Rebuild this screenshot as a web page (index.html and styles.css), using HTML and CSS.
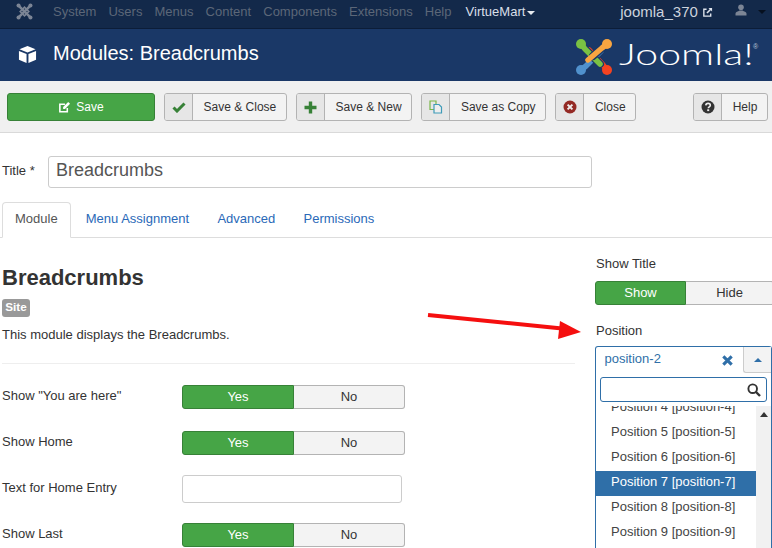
FILE: index.html
```html
<!DOCTYPE html>
<html lang="en">
<head>
<meta charset="utf-8">
<title>Modules: Breadcrumbs</title>
<link rel="stylesheet" href="styles.css">
</head>
<body>
<nav class="topbar">
  <svg class="top-logo" viewBox="0 0 20 20" width="17" height="17"><g fill="none" stroke="#7c8595" stroke-width="3" stroke-linecap="round"><path d="M3 3 L17 17"/><path d="M17 3 L3 17"/><path d="M5 10 L10 5 L15 10 L10 15z" stroke-width="2"/></g><g fill="#7c8595"><circle cx="3" cy="3" r="2.400"/><circle cx="17" cy="3" r="2.400"/><circle cx="3" cy="17" r="2.400"/><circle cx="17" cy="17" r="2.400"/></g></svg>
  <ul class="menu">
    <li>System</li><li>Users</li><li>Menus</li><li>Content</li><li>Components</li><li>Extensions</li><li>Help</li>
    <li class="active">VirtueMart<span class="caret light"></span></li>
  </ul>
  <div class="top-right">
    <span class="site">joomla_370
      <svg viewBox="0 0 12 12" width="11" height="11"><path d="M5 2.500H2v7.500h7.500V7" fill="none" stroke="#dfe4ec" stroke-width="1.500"/><path d="M7 1h4v4L9.600 3.600 6 7.200 4.800 6l3.600-3.600z" fill="#dfe4ec"/></svg>
    </span>
    <svg class="user" viewBox="0 0 12 12" width="12" height="12"><circle cx="6" cy="3.200" r="2.800" fill="#7c8595"/><path d="M0.500 11.500V9.500C0.500 8 3 7.500 4.500 6.500h3C9 7.500 11.500 8 11.500 9.500v2z" fill="#7c8595"/></svg>
    <span class="caret dark"></span>
  </div>
</nav>

<header class="header">
  <svg class="cube" viewBox="0 0 20 20" width="19" height="19"><path d="M10 1 L18.500 4.600 10 8 1.500 4.600z" fill="#fff"/><path d="M1 6.200 L9 9.400V19L1 15.600z" fill="#fff"/><path d="M19 6.200 L11 9.400V19L19 15.600z" fill="#fff"/></svg>
  <h1>Modules: Breadcrumbs</h1>
  <div class="brand">
    <svg viewBox="0 0 36 36" width="36" height="36">
      <g fill="none" stroke-linecap="round" stroke-linejoin="round">
        <path d="M31 31 L27 26 L13 11" stroke="#1a3867" stroke-width="8"/>
        <path d="M31 31 L27 26 L13 11" stroke="#f44321" stroke-width="5.500"/>
        <path d="M5 31 L10 27 L25 12" stroke="#1a3867" stroke-width="8"/>
        <path d="M5 31 L10 27 L25 12" stroke="#5091cd" stroke-width="5.500"/>
        <path d="M5 5 L9 10 L24 25" stroke="#1a3867" stroke-width="8"/>
        <path d="M5 5 L9 10 L24 25" stroke="#7ac143" stroke-width="5.500"/>
        <path d="M31 5 L26 9 L17 17" stroke="#1a3867" stroke-width="8"/>
        <path d="M31 5 L26 9 L12 21" stroke="#f9a541" stroke-width="5.500"/>
      </g>
      <circle cx="5" cy="5" r="5" fill="#7ac143"/><circle cx="31" cy="5" r="5" fill="#f9a541"/><circle cx="5" cy="31" r="5" fill="#5091cd"/><circle cx="31" cy="31" r="5" fill="#f44321"/>
    </svg>
    <span class="wordmark"><span class="wordmark-text">Joomla!</span></span>
    <span class="reg">®</span>
  </div>
</header>

<div class="toolbar">
  <button class="btn save" type="button">
    <svg viewBox="0 0 14 14" width="13" height="13"><path d="M10 7.500V11.500H2V3.500H7.500" fill="none" stroke="#fff" stroke-width="1.700"/><path d="M5.500 6.500L11 1l2 2-5.500 5.500H5.500z" fill="#fff"/></svg>
    Save
  </button>
  <button class="btn" type="button"><span class="ico"><svg viewBox="0 0 14 12" width="14" height="12"><path d="M1.500 6.500L5 10 12.500 2.500" fill="none" stroke="#378137" stroke-width="3"/></svg></span><span class="lbl">Save &amp; Close</span></button>
  <button class="btn" type="button"><span class="ico"><svg viewBox="0 0 13 13" width="13" height="13"><path d="M6.500 0.500v12M0.500 6.500h12" stroke="#378137" stroke-width="3.400"/></svg></span><span class="lbl">Save &amp; New</span></button>
  <button class="btn" type="button"><span class="ico"><svg viewBox="0 0 14 14" width="14" height="14"><path d="M1 1h6l0 8.500H1z" fill="none" stroke="#7ab648" stroke-width="1.200"/><path d="M5 4.500h5l2.500 2.500V13H5z" fill="#eeeeee" stroke="#3f9bb8" stroke-width="1.200"/></svg></span><span class="lbl">Save as Copy</span></button>
  <button class="btn" type="button"><span class="ico"><svg viewBox="0 0 14 14" width="14" height="14"><circle cx="7" cy="7" r="6.500" fill="#942a25"/><path d="M4.600 4.600l4.800 4.800M9.400 4.600l-4.800 4.800" stroke="#eee" stroke-width="2"/></svg></span><span class="lbl">Close</span></button>
  <button class="btn help" type="button"><span class="ico"><svg viewBox="0 0 14 14" width="14" height="14"><circle cx="7" cy="7" r="6.500" fill="#333"/><path d="M4.800 5.400C4.900 4 6 3.400 7.100 3.400c1.300 0 2.200.8 2.200 1.900 0 1.700-2 1.600-2 3" fill="none" stroke="#eee" stroke-width="1.600"/><rect x="6.200" y="9.300" width="2" height="1.800" fill="#eee"/></svg></span><span class="lbl">Help</span></button>
</div>

<div class="title-row">
  <label class="title-label" for="title">Title *</label>
  <input class="title-input" id="title" type="text" value="Breadcrumbs">
</div>

<ul class="tabs">
  <li class="tab on">Module</li>
  <li class="tab">Menu Assignment</li>
  <li class="tab">Advanced</li>
  <li class="tab">Permissions</li>
</ul>

<main class="content">
  <section class="left">
    <h2>Breadcrumbs</h2>
    <span class="badge">Site</span>
    <p class="desc">This module displays the Breadcrumbs.</p>
    <hr>
    <div class="field">
      <span class="field-label">Show "You are here"</span>
      <div class="toggle"><span class="yes">Yes</span><span class="no">No</span></div>
    </div>
    <div class="field">
      <span class="field-label">Show Home</span>
      <div class="toggle"><span class="yes">Yes</span><span class="no">No</span></div>
    </div>
    <div class="field">
      <span class="field-label">Text for Home Entry</span>
      <input class="text-input" type="text">
    </div>
    <div class="field">
      <span class="field-label">Show Last</span>
      <div class="toggle"><span class="yes">Yes</span><span class="no">No</span></div>
    </div>
  </section>
  <aside class="right">
    <div class="side-label">Show Title</div>
    <div class="toggle wide"><span class="yes">Show</span><span class="no">Hide</span></div>
    <div class="side-label pos">Position</div>
    <div class="chosen">
      <div class="chosen-head">
        <span class="chosen-value">position-2</span>
        <svg class="chosen-x" viewBox="0 0 10 10" width="11" height="11"><path d="M1.200 1.200l7.600 7.600M8.800 1.200L1.200 8.800" stroke="#2f6fa8" stroke-width="2.800"/></svg>
        <span class="chosen-arrow"><span class="tri"></span></span>
      </div>
      <div class="chosen-search">
        <svg viewBox="0 0 14 14" width="14" height="14"><circle cx="5.700" cy="5.700" r="4.300" fill="none" stroke="#333" stroke-width="1.900"/><path d="M9 9l4 4" stroke="#333" stroke-width="2.400"/></svg>
      </div>
      <div class="chosen-list">
        <ul class="options">
          <li>Position 4 [position-4]</li>
          <li>Position 5 [position-5]</li>
          <li>Position 6 [position-6]</li>
          <li class="hl">Position 7 [position-7]</li>
          <li>Position 8 [position-8]</li>
          <li>Position 9 [position-9]</li>
        </ul>
        <div class="scrollbar"><span class="up"></span></div>
      </div>
    </div>
  </aside>
</main>

<svg class="red-arrow" viewBox="0 0 772 548" width="772" height="548"><path d="M428 315 L562 328.500" stroke="#f50f0f" stroke-width="4"/><path d="M581 332 L558 339 L560 321z" fill="#f50f0f"/></svg>
</body>
</html>
```
FILE: styles.css
```css
* { box-sizing: border-box; }
html, body { margin: 0; padding: 0; height: 548px; overflow: hidden; }
body { position: relative; width: 772px; background: #fff; color: #333; font: 13px/18px "Liberation Sans", Arial, sans-serif; }
ul { list-style: none; margin: 0; padding: 0; }

.topbar { height: 29px; background: #13294a; border-bottom: 1px solid #0c1d38; display: flex; align-items: center; }
.top-logo { margin-left: 16px; margin-top: -5px; flex: none; }
.menu { display: flex; margin-left: 20px; margin-top: -5px; color: #5c6778; }
.menu li { margin-right: 12.100px; white-space: nowrap; }
.menu .active { color: #d9dfe8; margin-left: 2px; margin-right: 0; }
.caret { display: inline-block; width: 0; height: 0; border: 4px solid transparent; border-bottom: 0; margin-left: 2px; vertical-align: 1px; }
.caret.light { border-top-color: #e6e9ee; }
.caret.dark { border-top-color: #06101f; margin-left: 11px; }
.top-right { margin-left: auto; display: flex; align-items: center; margin-top: -5px; padding-right: 6px; }
.site { font-size: 15px; color: #ccd3dd; margin-right: 22px; white-space: nowrap; }
.site svg { vertical-align: -1px; }
.user { margin-top: -3px; }

.header { height: 52px; background: #1a3867; display: flex; align-items: center; padding-left: 18px; color: #fff; }
.cube { flex: none; margin-top: -1px; }
h1 { margin: 0 0 5px 16px; font-size: 20px; font-weight: 400; line-height: 24px; }
.brand { margin-left: auto; display: flex; align-items: center; padding-right: 14px; margin-top: 3px; }
.wordmark { display: block; width: 134px; margin: -8px 0 0 7px; height: 36px; }
.wordmark-text { display: block; width: 97px; font-family: "Lato", sans-serif; font-weight: 300; font-size: 30px; line-height: 36px; color: #fff; transform: scaleX(1.370); transform-origin: 0 50%; white-space: nowrap; }
.reg { display: block; width: 5px; font-size: 7px; line-height: 8px; color: #bcc6d6; margin-top: -19px; }

.toolbar { height: 52px; background: #f0f0f0; border-bottom: 1px solid #d9d9d9; padding: 12px 4px 0 7px; display: flex; align-items: flex-start; gap: 9px; }
.btn { flex: none; height: 28px; padding: 0; display: flex; align-items: stretch; font: 12px/26px "Liberation Sans", Arial, sans-serif; color: #333; white-space: nowrap; background: #f3f3f3; border: 1px solid #b3b3b3; border-radius: 3px; }
.btn .ico { width: 28px; border-right: 1px solid #b3b3b3; background: #e6e6e6; display: flex; align-items: center; justify-content: center; border-radius: 2px 0 0 2px; }
.btn .lbl { padding: 0 9.700px 0 10.600px; }
.btn.save { width: 148px; background: #46a546; border-color: #378137; color: #fff; justify-content: center; align-items: center; gap: 5px; }
.btn.help { margin-left: auto; }

.title-row { display: flex; align-items: center; padding: 23px 0 0 2px; }
.title-label { width: 46px; margin-top: -3px; }
.title-input { width: 544px; height: 32px; padding: 0 7px 3px; font: 18px/24px "Liberation Sans", Arial, sans-serif; color: #555; border: 1px solid #ccc; border-radius: 3px; background: #fff; }

.tabs { display: flex; margin-top: 14px; height: 36px; border-bottom: 1px solid #ddd; padding-left: 2px; }
.tab { padding: 8px 14.150px 0; height: 36px; color: #2a69b8; white-space: nowrap; }
.tab.on { height: 36px; color: #555; background: #fff; border: 1px solid #ddd; border-bottom-color: #fff; border-radius: 4px 4px 0 0; padding: 7px 12px 0; margin-right: 1px; }

.content { display: flex; align-items: flex-start; padding-left: 2px; }
.left { width: 573px; flex: none; padding-top: 26px; }
h2 { margin: 0; font-size: 22px; line-height: 28px; font-weight: 700; color: #333; }
.badge { display: block; width: 28px; height: 18px; margin-top: 7px; background: #999; color: #fff; font-size: 11.700px; font-weight: 700; line-height: 15px; text-align: center; border-radius: 3px; }
.desc { margin: 9px 0 0; }
hr { margin: 19px 0 0; border: 0; border-top: 1px solid #eee; }
.field { display: flex; align-items: flex-start; height: 46px; }
.left hr + .field { margin-top: 21px; }
.field-label { width: 180px; flex: none; margin-top: 2px; }
.toggle { display: flex; width: 223px; height: 24px; line-height: 21px; text-align: center; border-radius: 3px; }
.toggle .yes { flex: none; width: 112px; background: #46a546; border: 1px solid #378137; color: #fff; border-radius: 3px 0 0 3px; }
.toggle .no { flex: 1; background: #f3f3f3; border: 1px solid #b3b3b3; border-left: 0; color: #333; border-radius: 0 3px 3px 0; }
.text-input { width: 220px; height: 28px; margin-top: -2px; border: 1px solid #ccc; border-radius: 3px; background: #fff; }

.right { flex: none; width: 177px; margin-left: 20px; padding-top: 17px; }
.side-label { height: 18px; padding-left: 1px; }
.toggle.wide { width: 179px; margin-top: 8px; }
.toggle.wide .yes { width: 91px; }
.side-label.pos { margin-top: 17px; }

.chosen { position: relative; margin-top: 6px; height: 220px; border: 1px solid #2f6fa8; border-radius: 3px 3px 0 0; border-bottom: 0; background: #fff; }
.chosen-head { display: flex; align-items: center; height: 26px; color: #2f6fa8; padding-left: 8.500px; }
.chosen-value { flex: 1; margin-top: -2px; }
.chosen-x { margin-right: 10px; margin-top: 1px; }
.chosen-arrow { width: 28px; height: 26px; background: #f3f3f3; border-left: 1px solid #ccc; border-bottom: 1px solid #ccc; border-radius: 0 0 0 3px; display: flex; align-items: center; justify-content: center; }
.tri { width: 0; height: 0; border: 4px solid transparent; border-top: 0; border-bottom-color: #2f6fa8; }
.chosen-search { margin: 4px 4px 0; height: 25px; border: 1px solid #2f6fa8; border-radius: 3px; display: flex; align-items: center; justify-content: flex-end; padding-right: 5px; }
.chosen-list { position: relative; display: flex; margin-top: 4px; height: 160px; overflow: hidden; }
.options { width: 160px; flex: none; margin-top: -10px; }
.options li { height: 25px; line-height: 22px; padding-left: 15px; color: #444; white-space: nowrap; }
.options li.hl { background: #2f6fa8; color: #fff; }
.scrollbar { width: 15px; background: #f1f1f1; display: flex; justify-content: center; padding-top: 6px; }
.up { width: 0; height: 0; border: 4px solid transparent; border-top: 0; border-bottom: 5px solid #333; }

.red-arrow { position: absolute; left: 0; top: 0; pointer-events: none; }
```
